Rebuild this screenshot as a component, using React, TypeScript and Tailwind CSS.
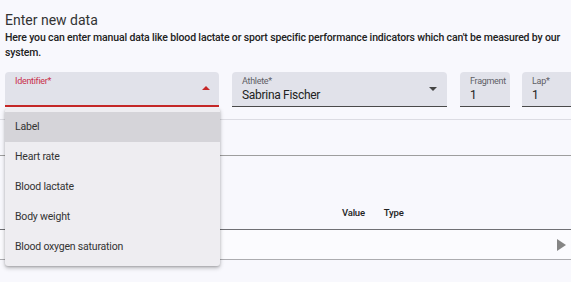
import React from 'react';

const OPTIONS = ['Label', 'Heart rate', 'Blood lactate', 'Body weight', 'Blood oxygen saturation'];

function Field({
  label,
  value,
  className,
  active,
  arrow,
}: {
  label: string;
  value?: string;
  className: string;
  active?: boolean;
  arrow?: 'up' | 'down';
}) {
  return (
    <div
      className={`relative h-[35px] shrink-0 rounded-t-[4px] bg-[#e1e2ea] ${
        active ? 'border-b-2 border-[#c62828]' : 'border-b border-[#4a4a4a]'
      } ${className}`}
    >
      <div
        className={`absolute left-[10px] top-[4px] text-[9px] leading-[11px] tracking-[-0.3px] ${
          active ? 'text-[#c9304a]' : 'text-[#5f5f66]'
        }`}
      >
        {label}
      </div>
      {value && (
        <div className="absolute left-[10px] top-[15px] text-[12px] leading-[16px] tracking-[-0.3px] text-[#222]">{value}</div>
      )}
      {arrow === 'up' && (
        <div className="absolute right-[9px] top-[14px] h-0 w-0 border-x-[4px] border-b-[4px] border-x-transparent border-b-[#c62828]" />
      )}
      {arrow === 'down' && (
        <div className="absolute right-[10px] top-[15px] h-0 w-0 border-x-[4px] border-t-[4px] border-x-transparent border-t-[#444]" />
      )}
    </div>
  );
}

export default function App() {
  return (
    <div className="relative h-[282px] w-[571px] overflow-hidden bg-[#f8f8fd] font-['Roboto',sans-serif] text-[#2a2a2a]">
      <div className="pl-[5px] pt-[10px]">
        <h1 className="text-[14px] font-normal leading-[20px] text-[#333]">Enter new data</h1>
        <p className="pr-[6px] text-[10.5px] font-medium leading-[15px] tracking-[-0.15px] text-[#222]">
          Here you can enter manual data like blood lactate or sport specific performance indicators which can't be measured by our
          system.
        </p>
      </div>

      <div className="mt-[12px] flex gap-[13px] pl-[5px]">
        <Field label="Identifier*" className="w-[214px]" active arrow="up" />
        <Field label="Athlete*" value="Sabrina Fischer" className="w-[215px]" arrow="down" />
        <Field label="Fragment" value="1" className="w-[50px]" />
        <Field label="Lap*" value="1" className="ml-[-1px] w-[60px]" />
      </div>

      <div className="h-[13px] border-b border-[#dcdce3]" />
      <div className="h-[36px] border-b border-[#9e9e9e]" />
      <div className="flex h-[74px] items-end border-b border-[#6f6f74] pb-[9px] text-[9.5px] font-medium tracking-[-0.2px] text-[#222]">
        <span className="ml-[342px]">Value</span>
        <span className="ml-[19px]">Type</span>
      </div>
      <div className="flex h-[30px] items-center justify-end border-b border-[#acacb0] bg-[#fbfbfe] pr-[5px]">
        <div className="h-0 w-0 border-y-[6px] border-l-[9px] border-y-transparent border-l-[#858585]" />
      </div>

      <div className="absolute left-[5px] top-[108px] w-[215px] rounded-[3px] bg-[#eeedf1] py-[4px] shadow-[0_2px_4px_rgba(0,0,0,0.25),0_1px_2px_rgba(0,0,0,0.15)]">
        {OPTIONS.map((o, i) => (
          <div
            key={o}
            className={`flex h-[30px] items-center pl-[10px] text-[10.5px] tracking-[-0.2px] text-[#333] ${
              i === 0 ? 'bg-[#d5d4d9]' : ''
            }`}
          >
            {o}
          </div>
        ))}
      </div>
    </div>
  );
}
